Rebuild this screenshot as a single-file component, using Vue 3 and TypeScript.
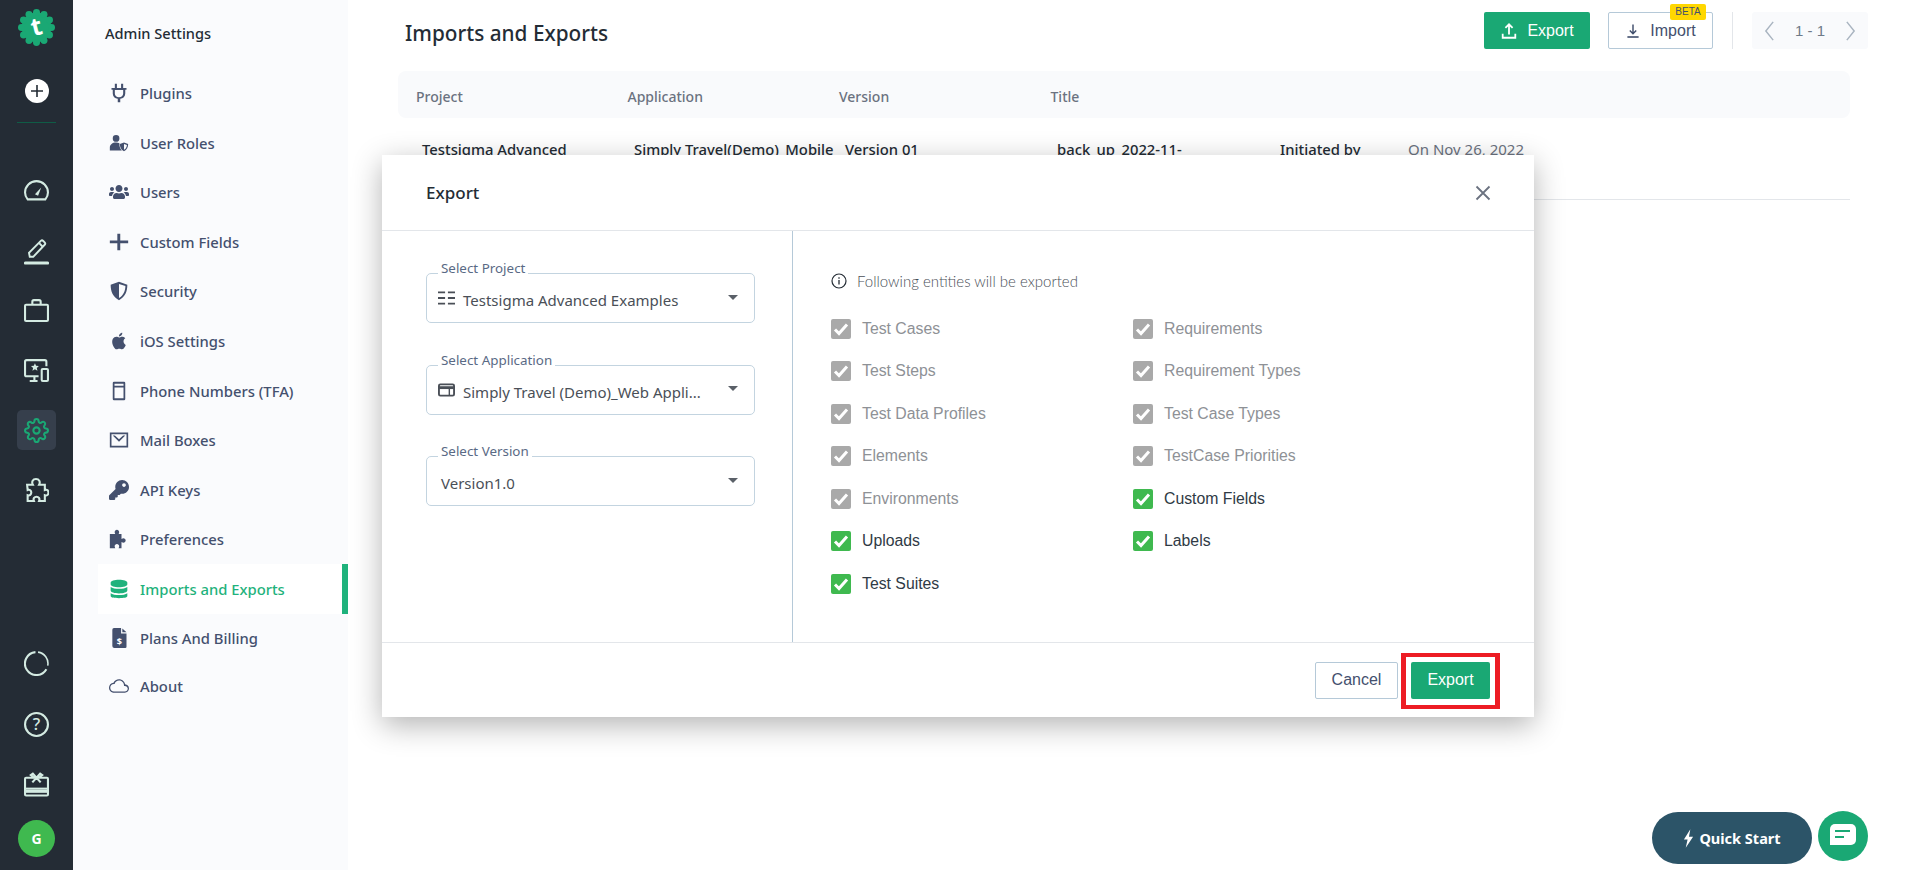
<script setup lang="ts">
interface NavItem { label: string; vb: string; d: string; active?: boolean; short?: boolean; mark?: string }

const gearOuter = 'M19.4 15a1.65 1.65 0 0 0 .33 1.82l.06.06a2 2 0 0 1 0 2.83 2 2 0 0 1-2.83 0l-.06-.06a1.65 1.65 0 0 0-1.82-.33 1.65 1.65 0 0 0-1 1.51V21a2 2 0 0 1-2 2 2 2 0 0 1-2-2v-.09A1.65 1.65 0 0 0 9 19.4a1.65 1.65 0 0 0-1.82.33l-.06.06a2 2 0 0 1-2.83 0 2 2 0 0 1 0-2.83l.06-.06a1.65 1.65 0 0 0 .33-1.82 1.65 1.65 0 0 0-1.51-1H3a2 2 0 0 1-2-2 2 2 0 0 1 2-2h.09A1.65 1.65 0 0 0 4.6 9a1.65 1.65 0 0 0-.33-1.82l-.06-.06a2 2 0 0 1 0-2.83 2 2 0 0 1 2.83 0l.06.06a1.65 1.65 0 0 0 1.82.33H9a1.65 1.65 0 0 0 1-1.51V3a2 2 0 0 1 2-2 2 2 0 0 1 2 2v.09a1.65 1.65 0 0 0 1 1.51 1.65 1.65 0 0 0 1.82-.33l.06-.06a2 2 0 0 1 2.83 0 2 2 0 0 1 0 2.83l-.06.06a1.65 1.65 0 0 0-.33 1.82V9a1.65 1.65 0 0 0 1.51 1H21a2 2 0 0 1 2 2 2 2 0 0 1-2 2h-.09a1.65 1.65 0 0 0-1.51 1z'

const navItems: NavItem[] = [
  { label: 'Plugins', vb: '0 0 24 24', d: 'M7 1h2.500v5h5V1H17v5h4v2h-1.500v4.500c0 3.500-2.500 6-6 6.400V23h-3v-4.100c-3.500-.4-6-2.900-6-6.400V8H3V6h4zM7 8.500v4c0 2.800 2.200 4.500 5 4.500s5-1.700 5-4.500v-4z' },
  { label: 'User Roles', vb: '0 0 24 24', d: 'M8.500 2.500a4 4 0 1 1 0 8 4 4 0 0 1 0-8zM1 21v-3.500C1 14 4 11.500 8.500 11.500c1.500 0 2.800.3 4 .8-.3 3 .5 6.500 3 8.700zM18 11.500l5 1.800c0 4-1.500 7-5 8.700-3.500-1.700-5-4.700-5-8.700zM18 13.200v7c2.300-1.300 3.300-3.500 3.500-5.800z' },
  { label: 'Users', vb: '0 0 640 512', d: 'M96 224c35.300 0 64-28.700 64-64s-28.700-64-64-64-64 28.700-64 64 28.700 64 64 64zm448 0c35.300 0 64-28.700 64-64s-28.700-64-64-64-64 28.700-64 64 28.700 64 64 64zm32 32h-64c-17.600 0-33.500 7.100-45.100 18.600 40.300 22.100 68.900 62 75.100 109.400h66c17.700 0 32-14.300 32-32v-32c0-35.300-28.700-64-64-64zm-256 0c61.900 0 112-50.100 112-112S381.900 32 320 32 208 82.100 208 144s50.100 112 112 112zm76.800 32h-8.300c-20.800 10-43.900 16-68.500 16s-47.600-6-68.500-16h-8.300C179.600 288 128 339.600 128 403.200V432c0 26.500 21.500 48 48 48h288c26.500 0 48-21.500 48-48v-28.800c0-63.600-51.600-115.200-115.200-115.200zm-223.700-13.400C161.500 263.100 145.600 256 128 256H64c-35.300 0-64 28.700-64 64v32c0 17.700 14.300 32 32 32h65.900c6.300-47.400 34.900-87.300 75.200-109.400z' },
  { label: 'Custom Fields', vb: '0 0 24 24', d: 'M10 2h3.500v8.200H23v3.200h-9.500V22H10v-8.600H1v-3.200h9z' },
  { label: 'Security', vb: '0 0 24 24', d: 'M12 1l10 3.500c0 8-2.500 14.500-10 18.500C4.500 19 2 12.500 2 4.500zM12 3.600v16.900c5.500-3.300 7.500-8.400 7.700-14.400z' },
  { label: 'iOS Settings', vb: '0 0 24 24', d: 'M18.710 19.500c-.83 1.240-1.710 2.450-3.050 2.470-1.340.03-1.770-.79-3.290-.79-1.530 0-2 .77-3.270.82-1.310.05-2.300-1.320-3.140-2.530C4.250 17 2.940 12.450 4.700 9.390c.87-1.520 2.430-2.480 4.120-2.510 1.280-.02 2.500.87 3.290.87.78 0 2.260-1.070 3.810-.91.65.03 2.470.26 3.640 1.980-.09.06-2.170 1.280-2.150 3.810.03 3.020 2.650 4.030 2.680 4.040-.03.07-.42 1.440-1.380 2.830M13 3.500c.73-.83 1.940-1.460 2.940-1.500.13 1.170-.34 2.350-1.040 3.190-.69.85-1.830 1.510-2.950 1.420-.15-1.150.41-2.350 1.050-3.110z' },
  { label: 'Phone Numbers (TFA)', vb: '0 0 24 24', d: 'M6 1h12a1.500 1.500 0 0 1 1.500 1.500v19A1.500 1.500 0 0 1 18 23H6a1.500 1.500 0 0 1-1.500-1.500v-19A1.500 1.500 0 0 1 6 1zm.6 2.200v2.600h10.800V3.200zm0 4.600v13h10.800v-13z' },
  { label: 'Mail Boxes', vb: '0 0 24 24', d: 'M1 3h22v18H1zm2 2v14h18V5zm1.500 1.500h2.600L12 11.200l4.900-4.700h2.600L12 14z' },
  { label: 'API Keys', vb: '0 0 512 512', d: 'M512 176.001C512 273.203 433.202 352 336 352c-11.220 0-22.190-1.062-32.827-3.069l-24.012 27.014A23.999 23.999 0 0 1 261.223 384H224v40c0 13.255-10.745 24-24 24h-40v40c0 13.255-10.745 24-24 24H24c-13.255 0-24-10.745-24-24v-78.059c0-6.365 2.529-12.470 7.029-16.971l161.802-161.802C163.108 213.814 160 195.271 160 176 160 78.798 238.797.001 335.999 0 433.488-.001 512 78.511 512 176.001zM336 128c0 26.510 21.490 48 48 48s48-21.490 48-48-21.490-48-48-48-48 21.490-48 48z' },
  { label: 'Preferences', vb: '0 0 24 24', d: 'M1 6h6.500C7 5 6.800 4.500 6.800 3.800 6.800 2.200 8 1 9.500 1s2.700 1.200 2.700 2.800c0 .7-.2 1.200-.7 2.200H15v6c1-.6 1.600-.8 2.300-.8 1.500 0 2.700 1.200 2.700 2.600s-1.200 2.600-2.700 2.600c-.7 0-1.300-.2-2.300-.8V23h-3.500c.5-1 .7-1.600.7-2.300 0-1.500-1.200-2.700-2.700-2.700s-2.700 1.200-2.700 2.700c0 .7.200 1.300.7 2.300H1z' },
  { label: 'Imports and Exports', vb: '0 0 24 24', active: true, d: 'M12 1c5.500 0 10 1.500 10 3.500v1.800C22 8.500 17.500 10 12 10S2 8.500 2 6.300V4.500C2 2.500 6.500 1 12 1zM2 9.500C4 11 8 11.700 12 11.700s8-.7 10-2.200v4.300c0 2-4.500 3.500-10 3.500S2 15.800 2 13.800zM2 17c2 1.500 6 2.200 10 2.200s8-.7 10-2.200v3.500C22 22.500 17.500 23 12 23S2 22.500 2 20.500z' },
  { label: 'Plans And Billing', vb: '0 0 24 24', mark: '$', d: 'M6 0h8.500v6.500H21v16a1.500 1.500 0 0 1-1.500 1.500h-13A2.500 2.500 0 0 1 4 21.500V2a2 2 0 0 1 2-2zm10 .5L21 5h-5z' },
  { label: 'About', vb: '0 0 24 24', short: true, d: 'M19.350 10.040C18.670 6.590 15.640 4 12 4 9.110 4 6.600 5.640 5.350 8.040 2.340 8.360 0 10.910 0 14c0 3.310 2.690 6 6 6h13c2.760 0 5-2.240 5-5 0-2.640-2.050-4.780-4.650-4.960zM19 18.500H6c-2.480 0-4.500-2.020-4.500-4.500S3.520 9.500 6 9.500h.71C7.370 7.190 9.480 5.500 12 5.500c3.040 0 6 2.460 6 6v.5h1c1.800 0 3.500 1.500 3.500 3.300s-1.700 3.200-3.500 3.200z' }
]

const columns = ['Project', 'Application', 'Version', 'Title']

const entities = [
  { label: 'Test Cases', locked: true },
  { label: 'Test Steps', locked: true },
  { label: 'Test Data Profiles', locked: true },
  { label: 'Elements', locked: true },
  { label: 'Environments', locked: true },
  { label: 'Uploads', locked: false },
  { label: 'Test Suites', locked: false },
  { label: 'Requirements', locked: true },
  { label: 'Requirement Types', locked: true },
  { label: 'Test Case Types', locked: true },
  { label: 'TestCase Priorities', locked: true },
  { label: 'Custom Fields', locked: false },
  { label: 'Labels', locked: false }
]

const logoBumps = Array.from({ length: 12 }, (_, i) => {
  const a = (i * Math.PI) / 6
  return { cx: 18 + 14.6 * Math.cos(a), cy: 18 + 14.6 * Math.sin(a) }
})
</script>

<template>
  <div class="page">
    <aside class="rail">
      <div class="rail-top">
        <svg class="logo" viewBox="0 0 36 36">
          <circle cx="18" cy="18" r="14.500" fill="#1aa874" />
          <circle v-for="(b, i) in logoBumps" :key="i" :cx="b.cx" :cy="b.cy" r="3.400" fill="#1aa874" />
          <text x="18" y="25.500" text-anchor="middle" class="logo-t" transform="rotate(-14 18 18)">t</text>
        </svg>
        <div class="add-btn">
          <svg viewBox="0 0 24 24" width="24" height="24"><circle cx="12" cy="12" r="12" fill="#fff" /><path d="M12 6v12M6 12h12" stroke="#242c35" stroke-width="1.600" /></svg>
        </div>
        <div class="rail-rule"></div>
      </div>

      <div class="rail-group">
        <div class="slot">
          <svg class="ri" viewBox="0 0 24 24"><path d="M3.500 20.500C2 18.800 1 16.500 1 14 1 7.900 5.900 3 12 3s11 4.900 11 11c0 2.500-1 4.800-2.500 6.500z" /><path d="M10.500 15.500l6-6.500-3 8z" class="solid" /></svg>
        </div>
        <div class="slot slot-low">
          <svg class="ri ri-tall" viewBox="0 0 26 28"><path d="M6 19l-.8-4.200L17.500 2.500a1.800 1.800 0 0 1 2.500 0l1.500 1.500a1.800 1.800 0 0 1 0 2.500L9.600 19z" /><path d="M15.500 4.500l4 4" /><path d="M1.500 25.500h23" stroke-width="3.200" stroke-linecap="round" /></svg>
        </div>
        <div class="slot">
          <svg class="ri" viewBox="0 0 24 24"><rect x="1" y="6.500" width="22" height="15.500" rx="1" /><path d="M8 6.500V3.500A1.500 1.500 0 0 1 9.500 2h5A1.500 1.500 0 0 1 16 3.500v3" /></svg>
        </div>
        <div class="slot">
          <svg class="ri" viewBox="0 0 24 24"><path d="M14 17.500H2.500A1.500 1.500 0 0 1 1 16V3.500A1.500 1.500 0 0 1 2.500 2H20a1.500 1.500 0 0 1 1.500 1.500V8" /><path d="M10 17.500v4M5.500 22H13" /><rect x="17" y="10.500" width="6" height="11.500" rx="1" /><path d="M10.500 5l1.100 2.500 2.700.2-2 1.800.6 2.700-2.400-1.400-2.400 1.400.6-2.700-2-1.800 2.700-.2z" class="solid" /></svg>
        </div>
        <div class="slot">
          <div class="gear-box">
            <svg class="ri gear" viewBox="0 0 24 24"><path d="M12 15a3 3 0 1 0 0-6 3 3 0 0 0 0 6z" /><path :d="gearOuter" /></svg>
          </div>
        </div>
        <div class="slot">
          <svg class="ri" viewBox="0 0 24 24"><path d="M3 6.500h5.500C7 3.500 8.500 1 11.500 1s4.500 2.500 3 5.500H20v5c2-.8 3.500.5 3.500 2.500s-1.500 3.300-3.500 2.500V22h-5.500c1-2.500-.5-4-2.500-4s-3.500 1.500-2.500 4H3.500v-5.500c2 .8 3.500-.7 3.500-2.500s-1.500-3.300-3.500-2.500z" /></svg>
        </div>
      </div>

      <div class="rail-bottom">
        <div class="slot">
          <svg class="ri ring" viewBox="0 0 24 24"><path d="M11 1.100A11 11 0 1 0 21.500 17.500" /><path d="M13.500 1.100A11 11 0 0 1 22.800 14" stroke-width="1.500" /></svg>
        </div>
        <div class="slot">
          <svg class="ri" viewBox="0 0 24 24"><circle cx="12" cy="12" r="11" /><text x="12" y="17" text-anchor="middle" class="q-mark">?</text></svg>
        </div>
        <div class="slot">
          <svg class="ri" viewBox="0 0 24 24"><rect x="1" y="5.500" width="22" height="17" rx="1" /><path d="M1 16h22" /><path d="M1 18.500h22" stroke-width="3" /><path d="M12 5.500L8.500 1.500 6.500 3l3 2.500M12 5.500l3.500-4 2 1.500-3 2.500M12 5.500L8 10M12 5.500l4 4.500" /></svg>
        </div>
        <div class="avatar">G</div>
      </div>
    </aside>

    <nav class="panel">
      <h2 class="panel-title">Admin Settings</h2>
      <ul class="nav">
        <li v-for="item in navItems" :key="item.label" class="nav-item" :class="{ active: item.active, short: item.short }">
          <span class="nav-icon">
            <svg :viewBox="item.vb" width="20" height="20"><path :d="item.d" fill-rule="evenodd" fill="currentColor" /><text v-if="item.mark" x="12.500" y="20" text-anchor="middle" class="doc-mark">{{ item.mark }}</text></svg>
          </span>
          <span>{{ item.label }}</span>
        </li>
      </ul>
    </nav>

    <main class="main">
      <header class="topbar">
        <h1 class="title">Imports and Exports</h1>
        <div class="tools">
          <button class="btn btn-primary">
            <svg viewBox="0 0 20 20" width="18" height="18"><path d="M10 14V3M6 6.500L10 2.500l4 4M3 13v4.500h14V13" fill="none" stroke="#fff" stroke-width="2" /></svg>
            Export
          </button>
          <button class="btn btn-line">
            <svg viewBox="0 0 20 20" width="16" height="18"><path d="M10 2v11M6 9.500l4 4 4-4" fill="none" stroke="#3f4d6b" stroke-width="1.800" /><path d="M3 17.500h14" stroke="#3f4d6b" stroke-width="2" /></svg>
            Import
            <span class="beta">BETA</span>
          </button>
          <span class="tool-rule"></span>
          <div class="pager">
            <svg viewBox="0 0 12 24" width="11" height="22"><path d="M10 2L2 12l8 10" fill="none" stroke="#a9b4c0" stroke-width="1.600" /></svg>
            <span>1 - 1</span>
            <svg viewBox="0 0 12 24" width="11" height="22"><path d="M2 2l8 10-8 10" fill="none" stroke="#a9b4c0" stroke-width="1.600" /></svg>
          </div>
        </div>
      </header>

      <div class="thead">
        <span v-for="c in columns" :key="c">{{ c }}</span>
      </div>
      <div class="trow">
        <span>Testsigma Advanced</span>
        <span>Simply Travel(Demo)_Mobile_</span>
        <span>Version 01</span>
        <span>back_up_2022-11-</span>
        <span>Initiated by</span>
        <span class="muted">On Nov 26, 2022</span>
      </div>
    </main>

    <section class="modal">
      <header class="modal-head">
        <span>Export</span>
        <svg viewBox="0 0 16 16" width="16" height="16"><path d="M1.500 1.500l13 13M14.500 1.500l-13 13" stroke="#6b7280" stroke-width="1.800" /></svg>
      </header>
      <div class="modal-body">
        <div class="fields">
          <div class="field">
            <label class="field-label">Select Project</label>
            <svg class="f-icon" viewBox="0 0 18 14" width="17" height="14"><path d="M0 1h7.500M10.500 1H18M0 7h7.500M10.500 7H18M0 13h7.500M10.500 13H18" stroke="#4a4f57" stroke-width="2" /></svg>
            <span class="f-value">Testsigma Advanced Examples</span>
            <span class="caret"></span>
          </div>
          <div class="field">
            <label class="field-label">Select Application</label>
            <svg class="f-icon" viewBox="0 0 18 14" width="17" height="14"><rect x="1" y="1" width="16" height="12" rx="1.500" fill="none" stroke="#4a4f57" stroke-width="2" /><path d="M1 4.500h16" stroke="#4a4f57" stroke-width="3" /><path d="M12 5v8" stroke="#4a4f57" stroke-width="1.500" /></svg>
            <span class="f-value">Simply Travel (Demo)_Web Appli...</span>
            <span class="caret"></span>
          </div>
          <div class="field">
            <label class="field-label">Select Version</label>
            <span class="f-value f-plain">Version1.0</span>
            <span class="caret"></span>
          </div>
        </div>
        <div class="entities">
          <p class="note">
            <svg viewBox="0 0 16 16" width="16" height="16"><circle cx="8" cy="8" r="7" fill="none" stroke="#242c35" stroke-width="1.200" /><path d="M8 7v4.500M8 4.200v1.500" stroke="#242c35" stroke-width="1.300" /></svg>
            Following entities will be exported
          </p>
          <div class="checks">
            <div v-for="e in entities" :key="e.label" class="check" :class="{ locked: e.locked }">
              <span class="box">
                <svg viewBox="0 0 20 20" width="20" height="20"><path d="M4 10.500l4 4 8-9" fill="none" stroke="#fff" stroke-width="3" /></svg>
              </span>
              {{ e.label }}
            </div>
          </div>
        </div>
      </div>
      <footer class="modal-foot">
        <button class="btn btn-line cancel">Cancel</button>
        <button class="btn btn-primary confirm">Export<span class="red-mark"></span></button>
      </footer>
    </section>

    <button class="quick">
      <svg viewBox="0 0 12 20" width="11" height="19"><path d="M8 0L1 11h4l-2 9 8-12H6.500z" fill="#fff" /></svg>
      Quick Start
    </button>
    <button class="chat">
      <svg viewBox="0 0 26 24" width="26" height="24"><path d="M5 0h16a5 5 0 0 1 5 5v11a5 5 0 0 1-5 5H0V5a5 5 0 0 1 5-5z" fill="#fff" /><path d="M5 7h15M5 13h9" stroke="#1aa874" stroke-width="2" /></svg>
    </button>
  </div>
</template>

<style>
html, body { margin: 0; background: #fff; }
</style>

<style scoped>
* { box-sizing: border-box; }
.page {
  position: relative;
  display: flex;
  width: 1908px;
  height: 870px;
  overflow: hidden;
  background: #fff;
  font-family: "Noto Sans", sans-serif;
  font-size: 14px;
  color: #242c35;
}
.rail {
  flex: 0 0 73px;
  display: flex;
  flex-direction: column;
  align-items: center;
  background: #242c35;
}
.rail-top { display: flex; flex-direction: column; align-items: center; height: 160px; padding-top: 9px; }
.logo { width: 37px; height: 37px; display: block; }
.logo-t { font: 700 24px "Noto Sans", sans-serif; fill: #fff; }
.add-btn { margin-top: 33px; height: 24px; }
.add-btn svg { display: block; }
.rail-rule { width: 39px; height: 1px; margin-top: 19px; background: #0f5c46; }
.rail-group { display: flex; flex-direction: column; }
.rail-bottom { margin-top: auto; padding-bottom: 13px; display: flex; flex-direction: column; align-items: center; }
.slot { width: 73px; height: 60px; display: flex; align-items: center; justify-content: center; }
.slot-low { padding-top: 4px; }
.ri { width: 25px; height: 25px; fill: none; stroke: #d4ebe2; stroke-width: 2; }
.ri-tall { height: 28px; }
.ring { margin-top: -2px; }
.ri .solid { fill: #d4ebe2; stroke: none; }
.q-mark { font: 500 16px "Noto Sans", sans-serif; fill: #d4ebe2; stroke: none; }
.gear-box { width: 39px; height: 40px; border-radius: 5px; background: #363f4c; display: flex; align-items: center; justify-content: center; }
.gear { stroke: #1aa874; }
.avatar {
  width: 37px; height: 37px; margin-top: 6px; border-radius: 50%;
  background: #3fb94f; color: #fff; font-weight: 700; font-size: 14px;
  display: flex; align-items: center; justify-content: center;
}

.panel { flex: 0 0 275px; background: #fafbfd; padding-left: 25px; }
.panel-title { margin: 23px 0 0 7px; font-size: 14.600px; line-height: 20px; font-weight: 500; color: #242c35; }
.nav { list-style: none; margin: 25.500px 0 0; padding: 0; }
.nav-item {
  display: flex; align-items: center; height: 49.550px; padding-left: 11px;
  color: #44506e; font-size: 14.800px; font-weight: 500;
}
.nav-item.short { height: 45px; }
.nav-icon { width: 31px; display: flex; }
.nav-icon svg { display: block; }
.nav-item.active { background: #fff; color: #1fb27c; border-right: 6px solid #1fb27c; }
.doc-mark { font: 700 11px "Noto Sans", sans-serif; fill: #fff; }

.main { flex: 1; padding: 12px 58px 0 50px; min-width: 0; }
.topbar { display: flex; align-items: center; justify-content: space-between; height: 37px; margin-right: -18px; padding-left: 7px; }
.title { margin: 4px 0 0; font-size: 20.750px; font-weight: 500; color: #242c35; }
.tools { display: flex; align-items: center; height: 37px; }
.btn {
  position: relative; display: inline-flex; align-items: center; justify-content: center; gap: 9px;
  height: 37px; border-radius: 2px; border: 1px solid transparent; padding: 0;
  font: 400 16px "Liberation Sans", sans-serif; cursor: pointer;
}
.btn-primary { background: #1aa874; color: #fff; }
.btn-line { background: #fff; border-color: #b5c9d8; color: #44506e; }
.tools .btn-primary { width: 106px; margin-right: 18px; }
.tools .btn-line { width: 105px; }
.beta {
  position: absolute; left: 61px; top: -9px; width: 36px; height: 16px; border-radius: 2px;
  background: #ffd700; color: #44506e; font: 400 10px/16px "Liberation Sans", sans-serif; text-align: center;
}
.tool-rule { width: 1px; height: 37px; margin: 0 19px 0 19px; background: #e3e6ea; }
.pager {
  width: 116px; height: 37px; background: #f9fafc; border-radius: 3px; padding: 0 12px;
  display: flex; align-items: center; justify-content: space-between;
  font: 400 15px "Liberation Sans", sans-serif; color: #6f7a89;
}
.thead {
  display: grid; grid-template-columns: 211.500px 211.500px 211.500px 1fr; align-items: center;
  height: 47px; margin-top: 22px; padding: 3px 0 0 18px; border-radius: 8px; background: #f9fafc;
  color: #6b7280; font-size: 14px; font-weight: 500;
}
.trow {
  display: grid; grid-template-columns: 212px 211px 212px 223px 128px 1fr;
  height: 82px; padding: 21px 0 0 24px; border-bottom: 1px solid #e3e6ea;
  font-size: 14.800px; line-height: 20px; font-weight: 500; color: #242c35; white-space: nowrap;
}
.muted { color: #6b7280; font-weight: 400; font-size: 15px; }

.modal {
  position: absolute; left: 382px; top: 155px; width: 1152px; height: 562px;
  display: flex; flex-direction: column; background: #fff;
  box-shadow: 0 8px 28px rgba(0, 0, 0, 0.3);
}
.modal-head {
  flex: 0 0 76px; display: flex; align-items: center; justify-content: space-between;
  padding: 0 43px 0 44px; border-bottom: 1px solid #e3e6ea;
  font-size: 17px; font-weight: 500; color: #242c35;
}
.modal-body { flex: 1; display: flex; min-height: 0; }
.fields {
  flex: 0 0 411px; min-width: 0; padding: 42px 37px 0 44px;
  display: flex; flex-direction: column; gap: 41.500px; border-right: 1px solid #b5c9d8;
}
.field {
  position: relative; height: 50px; display: flex; align-items: center; padding: 4px 12px 0 11px;
  border: 1px solid #c3d4e0; border-radius: 5px; font-size: 15px; color: #4a4f57;
}
.field-label {
  position: absolute; left: 11px; top: -15px; padding: 0 3px; background: #fff;
  font-size: 13.400px; line-height: 18px; color: #5a6a85;
}
.f-icon { flex: none; margin: -4px 8px 0 0; }
.f-value { flex: 1; min-width: 0; margin-right: 18px; white-space: nowrap; }
.f-plain { padding-left: 3px; }
.caret { flex: none; width: 0; height: 0; margin: -6px 4px 0 0; border: 5px solid transparent; border-top: 5px solid #5a6068; border-bottom: 0; }
.entities { flex: 1; padding: 40px 0 0 38px; }
.note {
  display: flex; align-items: center; gap: 10px; margin: 0; height: 20px;
  font: 300 15px "Lato", sans-serif; color: #4a4f57;
}
.checks {
  display: grid; grid-auto-flow: column; grid-template-rows: repeat(7, 42.500px); grid-template-columns: 302px 1fr;
  margin-top: 16.500px;
}
.check { display: flex; align-items: center; gap: 11px; font: 400 15.800px "Liberation Sans", sans-serif; color: #2f3a45; }
.box { width: 20px; height: 20px; border-radius: 2px; background: #3fb94f; display: block; }
.box svg { display: block; }
.check.locked { color: #8e9196; }
.check.locked .box { background: #a9a9a9; }
.modal-foot {
  flex: 0 0 75px; display: flex; align-items: center; justify-content: flex-end; gap: 13px;
  padding-right: 44px; border-top: 1px solid #e3e6ea;
}
.cancel { width: 83px; }
.confirm { width: 79px; }
.red-mark { position: absolute; left: -11px; right: -11px; top: -10px; bottom: -11px; border: solid #ed1c24; border-width: 4px 5px; pointer-events: none; }

.quick {
  position: absolute; left: 1652px; top: 812px; width: 160px; height: 52px; border: 0; border-radius: 26px;
  background: #2c5468; color: #fff; font: 700 14.500px "Noto Sans", sans-serif;
  display: flex; align-items: center; justify-content: center; gap: 5px;
}
.chat {
  position: absolute; left: 1818px; top: 811px; width: 50px; height: 50px; border: 0; border-radius: 50%;
  background: #1aa874; display: flex; align-items: center; justify-content: center; padding: 0;
}
</style>
